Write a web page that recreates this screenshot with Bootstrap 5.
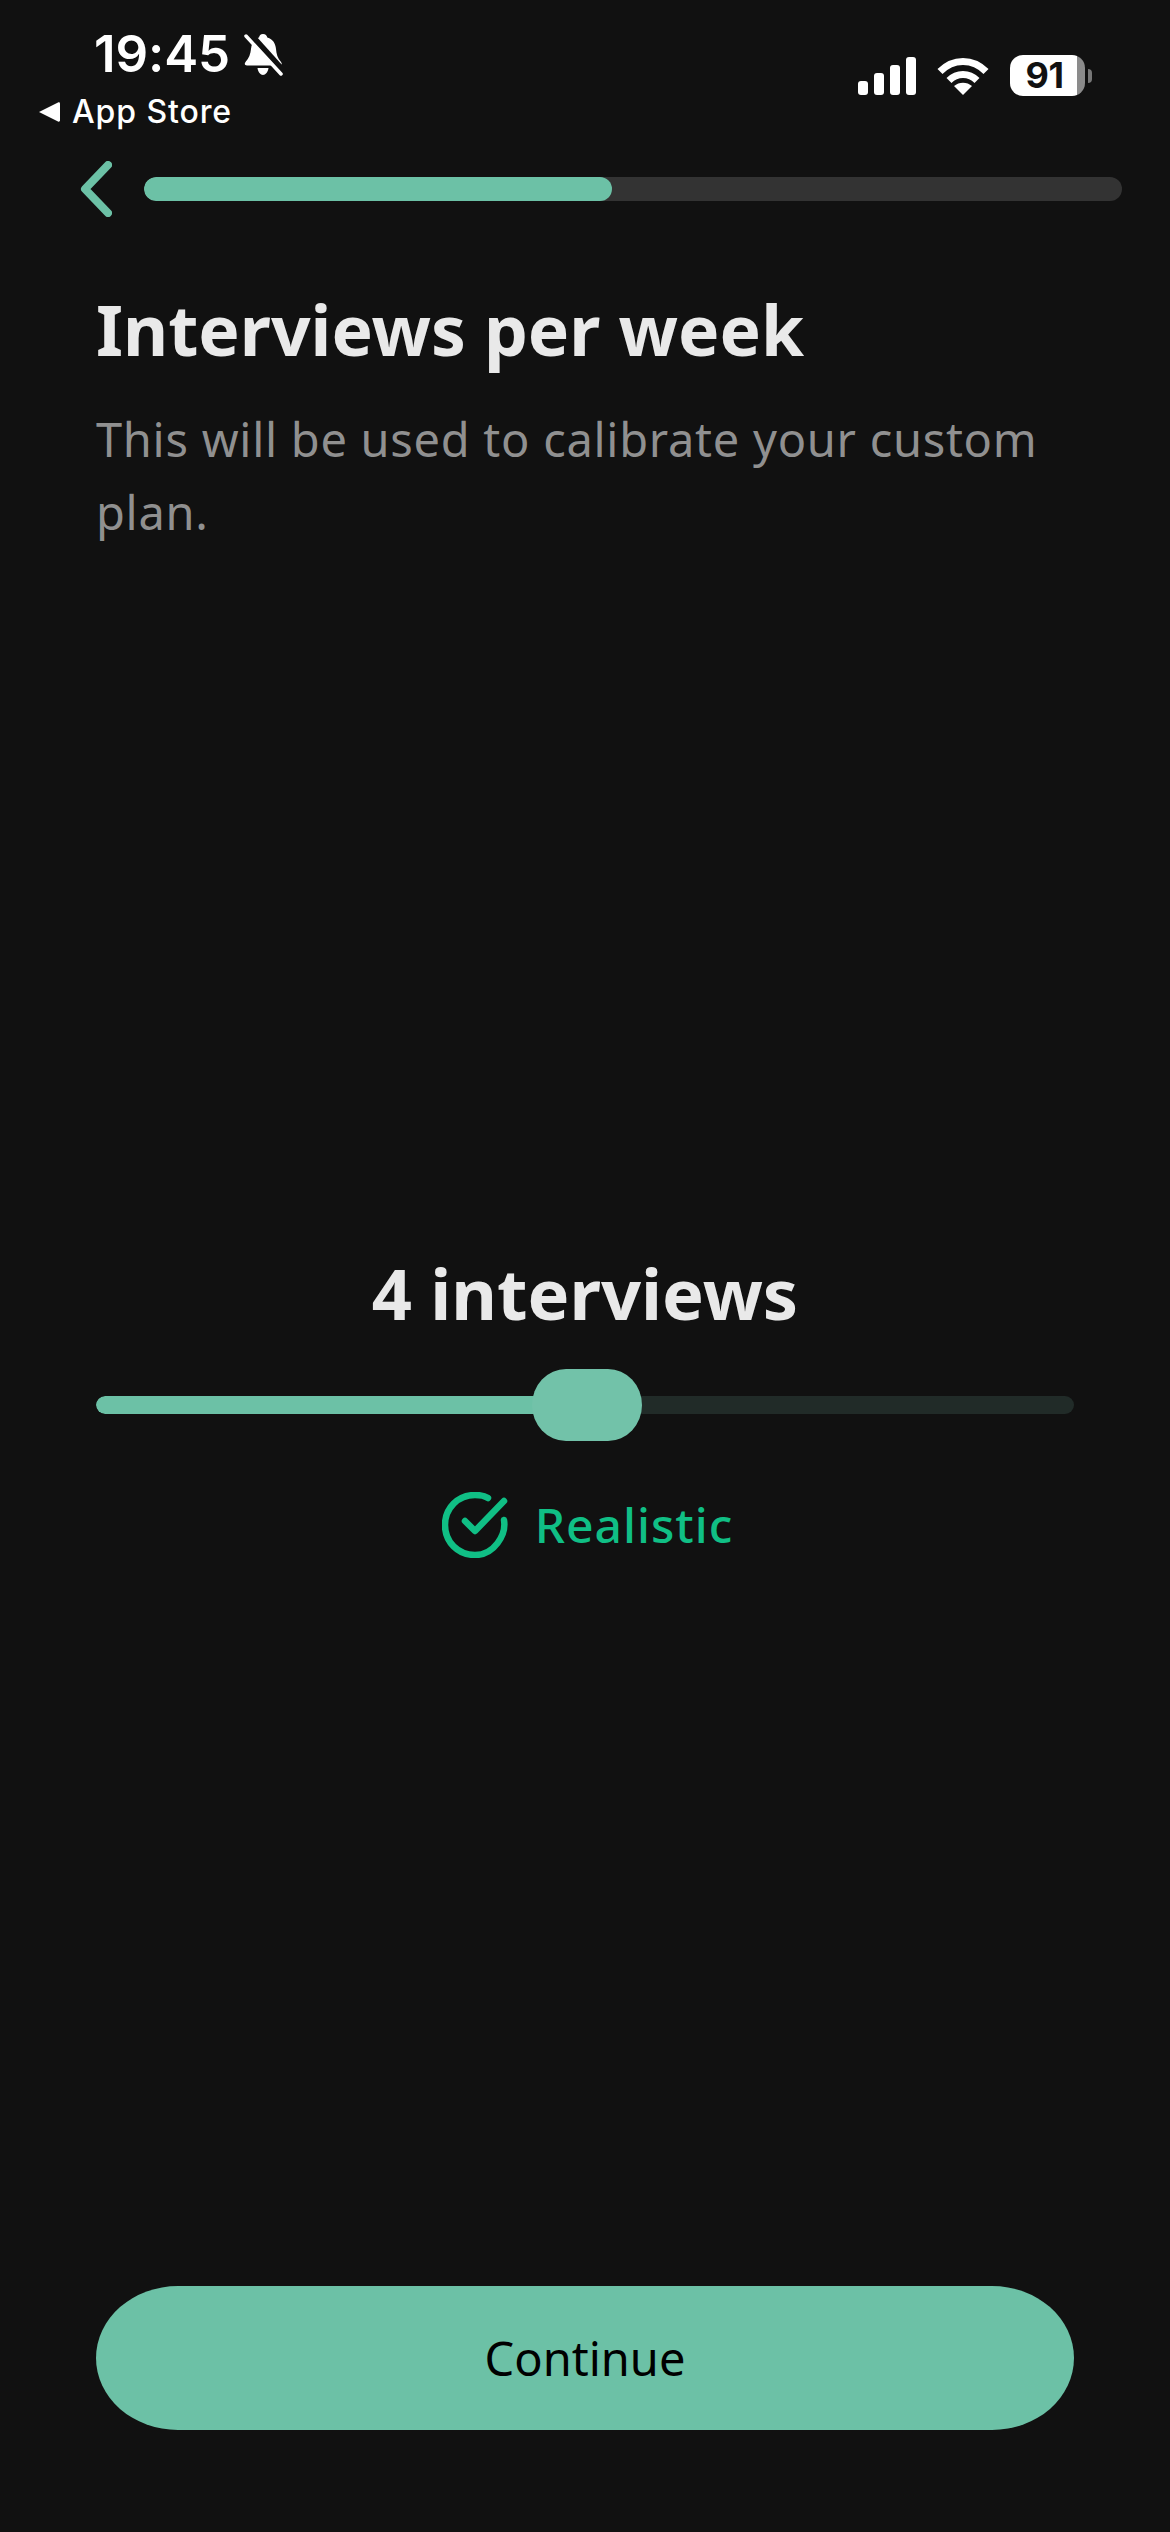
<!DOCTYPE html>
<html lang="en">
<head>
<meta charset="utf-8">
<title>Interviews per week</title>
<link href="https://cdn.jsdelivr.net/npm/bootstrap@5.3.0/dist/css/bootstrap.min.css" rel="stylesheet">
<style>
html,body{background:#111;margin:0}
body{font-family:"Noto Sans","Open Sans",sans-serif;width:1170px;height:2532px;overflow:hidden}
.screen{height:2532px;color:#e9e9e9}
.sys{height:150px;padding:0 0 0 38px;font-family:Inter,"Liberation Sans",sans-serif;color:#fff}
.sys-left{padding-top:23px}
.clock{font-size:51px;font-weight:600;line-height:62px;margin-left:56px;gap:14px;letter-spacing:-.1px}
.backapp{font-size:32px;font-weight:500;line-height:40px;margin-top:7px;gap:12px;letter-spacing:.9px}
.sys-right{padding:55px 78px 0 0;gap:21px}
.batt{width:75px;height:41px;border-radius:13px;background:linear-gradient(90deg,#fff 0,#fff 90%,#8b8b8b 90%);color:#111;font-size:36px;font-weight:700;line-height:41px;text-align:center;letter-spacing:-.5px;padding-right:6px}
.battwrap{gap:3px}
.nub{width:4px;height:14px;background:#777;border-radius:0 7px 7px 0}
.topbar{padding:11px 48px 0 80px;gap:32px;height:70px}
.topprog{height:24px;background:#333;border-radius:12px;flex:1;margin-top:16px}
.topprog .progress-bar,.trackbar .progress-bar{background:#6cc1a6;border-radius:12px}
.copy{padding:64px 96px 0}
.headline{font-size:69.500px;font-weight:700;line-height:90px;margin:0;color:#e9e9e9}
.sub{font-size:47px;line-height:72.500px;color:#909090;margin:29px 0 0;letter-spacing:.72px}
.metric{padding:0 96px 28px}
.count{font-size:70.300px;font-weight:700;line-height:90px;margin:0;color:#e9e9e9}
.slider{height:72px;margin-top:31px}
.trackbar{height:18px;background:#212b28;border-radius:9px;width:100%}
.thumb{position:absolute;left:436px;top:0;width:110px;height:72px;background:#72c2a9;border-radius:34px/36px}
.verdict{margin-top:51px;gap:27px;padding-left:5px;color:#10bf85;font-size:48px;font-weight:500;line-height:66px;letter-spacing:1px}
.cta{padding:0 96px 102px}
.cta .btn{height:144px;width:100%;background:#6cc1a6;border:0;color:#000;font-size:47px;border-radius:82px/72px;line-height:1}
</style>
</head>
<body>
<div class="screen d-flex flex-column">
  <div class="sys d-flex justify-content-between align-items-start">
    <div class="sys-left">
      <div class="clock d-flex align-items-center">
        <span>19:45</span>
        <svg width="39" height="43" viewBox="0 0 39 43" aria-hidden="true"><path fill="#fff" d="M19 1c2.500 0 4 1.700 4.300 3.600C29 6 31.500 11 32 16c.4 5 1.500 9 5 13 1.500 2 .5 3.500-1.500 3.500H3C1 32.500 0 31 1.500 29 5 25 6.500 21 7 16c.5-5 3-10 8-11.400C15.300 2.700 16.500 1 19 1zM13.500 35h11c-.5 4-3 7-5.500 7s-5-3-5.500-7z"/><path stroke="#111" stroke-width="8" d="M3-1 39 39"/><path stroke="#fff" stroke-width="3.500" stroke-linecap="round" d="M2 3l35 38"/></svg>
      </div>
      <div class="backapp d-flex align-items-center">
        <svg width="22" height="22" viewBox="0 0 22 22" aria-hidden="true"><path fill="#fff" d="M1 11 20 1.500c1-.5 2 0 2 1v17c0 1-1 1.500-2 1z"/></svg>
        <span>App Store</span>
      </div>
    </div>
    <div class="sys-right d-flex align-items-center">
      <svg width="58" height="38" viewBox="0 0 58 38" aria-hidden="true"><g fill="#fff"><rect x="0" y="24" width="10" height="14" rx="3"/><rect x="16" y="16" width="10" height="22" rx="3"/><rect x="32" y="8" width="10" height="30" rx="3"/><rect x="48" y="0" width="10" height="38" rx="3"/></g></svg>
      <svg width="52" height="38" viewBox="0 0 52 38" aria-hidden="true"><g fill="none" stroke="#fff" stroke-width="7"><path d="M3 14.500C16 1 36 1 49 14.500"/><path d="M12 23.500c8-8 20-8 28 0"/></g><path fill="#fff" d="M26 38l-9-9c5-4.500 13-4.500 18 0z"/></svg>
      <div class="battwrap d-flex align-items-center">
        <div class="batt">91</div>
        <div class="nub"></div>
      </div>
    </div>
  </div>

  <div class="topbar d-flex align-items-start">
    <svg width="32" height="56" viewBox="0 0 32 56" aria-hidden="true" class="flex-shrink-0"><path fill="none" stroke="#6cc1a6" stroke-width="8" stroke-linecap="round" stroke-linejoin="round" d="M28 4 5 28l23 24"/></svg>
    <div class="progress topprog" role="progressbar" aria-valuenow="48" aria-valuemin="0" aria-valuemax="100"><div class="progress-bar" style="width:47.9%"></div></div>
  </div>

  <div class="copy">
    <h1 class="headline">Interviews per week</h1>
    <p class="sub">This will be used to calibrate your custom plan.</p>
  </div>

  <div class="flex-grow-1 d-flex flex-column justify-content-center metric">
    <h2 class="count text-center">4 interviews</h2>
    <div class="slider position-relative d-flex align-items-center">
      <div class="progress trackbar" role="progressbar" aria-valuenow="50" aria-valuemin="0" aria-valuemax="100"><div class="progress-bar" style="width:50%"></div></div>
      <div class="thumb"></div>
    </div>
    <div class="verdict d-flex justify-content-center align-items-center">
      <svg width="66" height="66" viewBox="0 0 66 66" aria-hidden="true"><g fill="none" stroke="#10bf85" stroke-width="6.500" stroke-linecap="round" stroke-linejoin="round"><path d="M62 28c2.500 15-10 35-29 35C16 63 3 50 3 33 3 16 16 3 33 3c6 0 10 1 13 3"/><path d="M23 29l10 10 29-30"/></g></svg>
      <span>Realistic</span>
    </div>
  </div>

  <div class="cta">
    <button type="button" class="btn">Continue</button>
  </div>
</div>
<script src="https://cdn.jsdelivr.net/npm/bootstrap@5.3.0/dist/js/bootstrap.bundle.min.js"></script>
</body>
</html>
